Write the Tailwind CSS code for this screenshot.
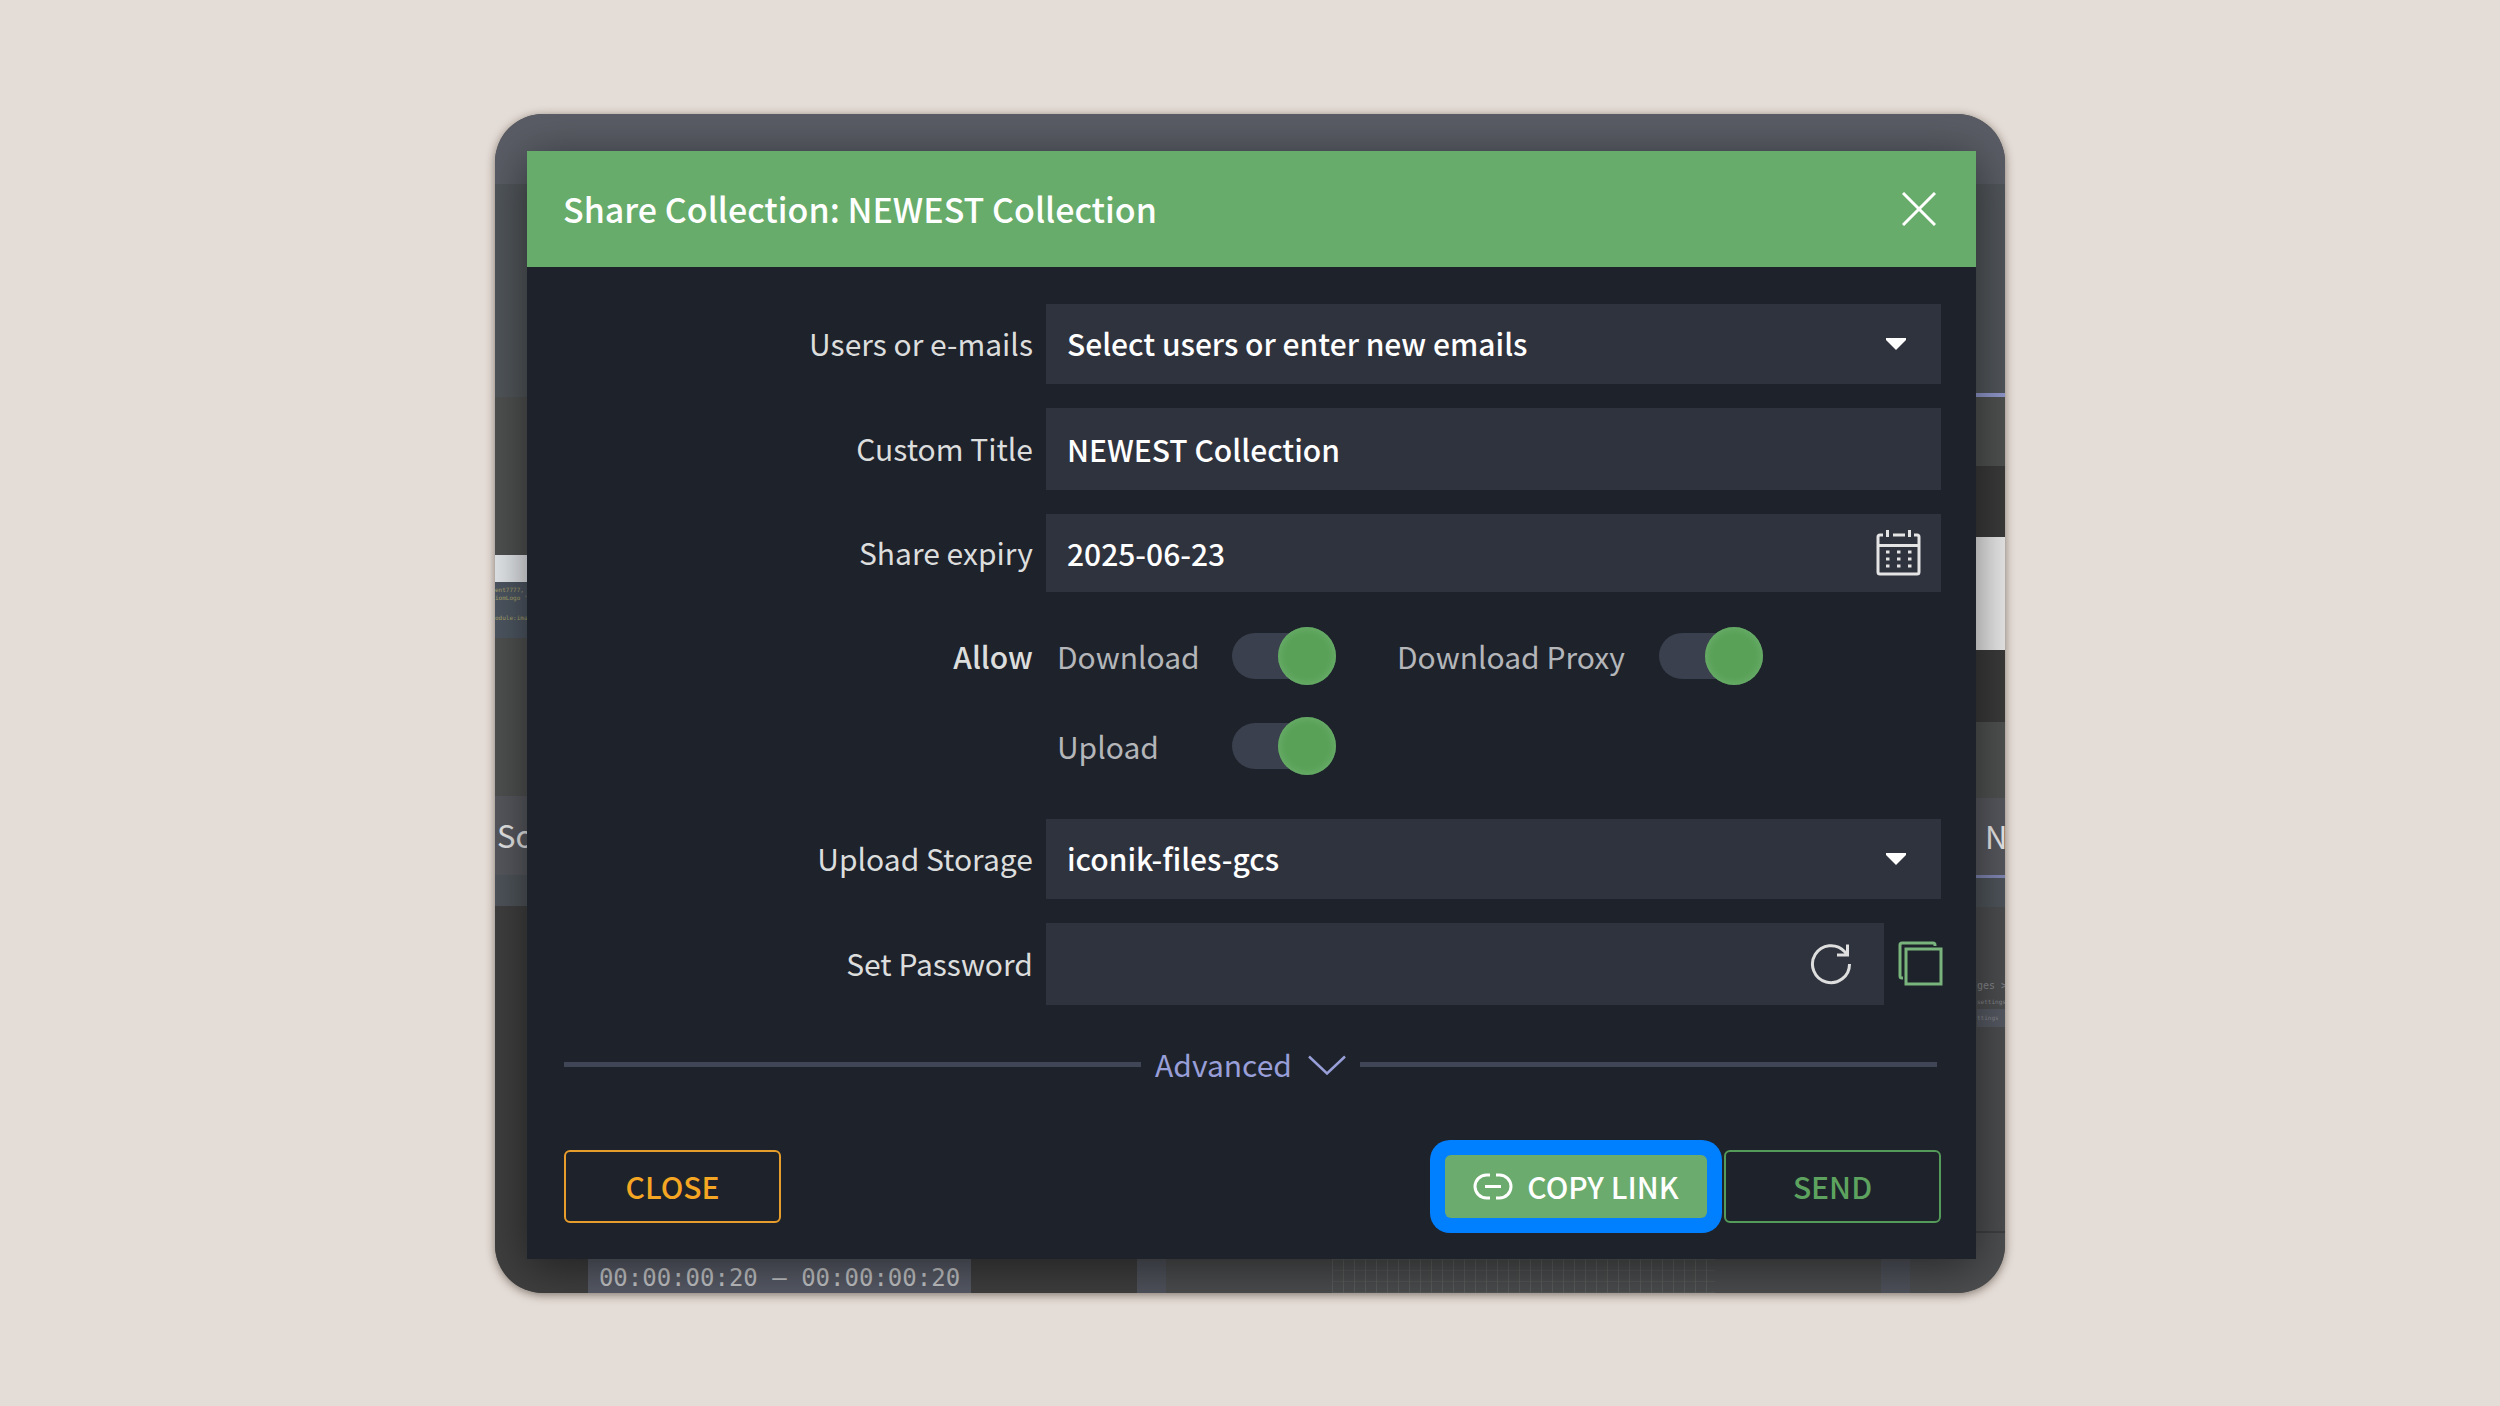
<!DOCTYPE html>
<html lang="en">
<head>
    <meta charset="UTF-8">
    <meta name="viewport" content="width=device-width, initial-scale=1.0">
    <title>Share Collection</title>
    <script src="https://cdn.jsdelivr.net/npm/@tailwindcss/browser@4"></script>
</head>
<body class="bg-[#e4dcd6] min-h-screen flex justify-center items-center font-['Noto_Sans_CJK_SC','Noto_Sans',sans-serif]">

    <main class="relative w-full max-w-[1510px] overflow-hidden rounded-[48px] bg-[#4b4c4d] pt-[37px] pb-[34px] pl-8 pr-[29px] shadow-[0_2px_10px_rgba(60,50,40,0.6)]">

        <!-- App behind the dialog -->
        <div class="absolute inset-0 flex flex-col" aria-hidden="true">
            <div class="h-[70px] shrink-0 bg-[#5a5d65]"></div>
            <div class="flex-1 flex">
                <div class="w-[642px] shrink-0 flex flex-col overflow-hidden">
                    <div class="h-[213px] bg-[#51565a]"></div>
                    <div class="h-[158px] bg-[#4f5050]"></div>
                    <div class="h-[27px] bg-[#e4e7ea]"></div>
                    <div class="h-14 bg-[#4d5661] pt-1 font-['DejaVu_Sans_Mono',monospace] text-[6px] leading-[8px] text-[#a8a26c]">
                        <p>ent7777, spl</p>
                        <p>iomLogo 'dat</p>
                        <p class="pt-3">odule:image</p>
                    </div>
                    <div class="h-[158px] bg-[#4f5050]"></div>
                    <div class="h-[79px] bg-[#57585e] flex items-center pl-[2px] text-[31px] text-[#e8e8e8]">Source</div>
                    <div class="h-[31px] bg-[#4e545a]"></div>
                    <div class="flex-1 bg-[#3f3f3f] flex items-end pl-[93px]">
                        <div class="bg-[#575b66] w-[383px] h-[34px] pt-1 flex items-center justify-center font-['DejaVu_Sans_Mono',monospace] text-2xl text-[#c4c5c7] whitespace-nowrap">00:00:00:20 – 00:00:00:20</div>
                    </div>
                </div>
                <div class="flex-1 flex flex-col overflow-hidden">
                    <div class="h-[209px] bg-[#51565a]"></div>
                    <div class="h-1 bg-[#9098cc]"></div>
                    <div class="h-[69px] bg-[#4f5151]"></div>
                    <div class="h-[71px] bg-[#3a3a3a]"></div>
                    <div class="h-[113px] bg-[#e9e9e9]"></div>
                    <div class="h-[72px] bg-[#3a3a3a]"></div>
                    <div class="h-[76px] bg-[#4f5151]"></div>
                    <div class="h-[77px] bg-[#57585e] flex items-center justify-end">
                        <span class="w-5 text-[31px] text-[#e8e8e8]">N</span>
                    </div>
                    <div class="h-[3px] bg-[#8087b4]"></div>
                    <div class="h-[29px] bg-[#4e545a]"></div>
                    <div class="h-[324px] bg-[#4c4d4f] pt-[70px] flex flex-col items-end font-['DejaVu_Sans_Mono',monospace] text-[#85878c]">
                        <p class="w-7 text-[10px] leading-[18px] whitespace-nowrap">ges &gt; a</p>
                        <p class="w-7 text-[6px] leading-[14px] whitespace-nowrap">settings</p>
                        <p class="w-7 text-[6px] leading-[18px] whitespace-nowrap bg-[#555962]">ttings</p>
                    </div>
                    <div class="h-[2px] bg-[#3e3f40]"></div>
                    <div class="flex-1 flex">
                        <div class="w-[29px] bg-[#50535c]"></div>
                        <div class="flex-1 flex justify-center bg-[#4c4d4e]">
                            <div class="w-[383px] bg-[repeating-linear-gradient(90deg,#5b5c5c_0_1px,transparent_1px_11px),repeating-linear-gradient(0deg,#555656_0_1px,transparent_1px_11px)]"></div>
                        </div>
                        <div class="w-[29px] bg-[#50535c]"></div>
                        <div class="w-[95px] bg-[#4d4e50]"></div>
                    </div>
                </div>
            </div>
        </div>

        <!-- Share dialog -->
        <form class="relative bg-[#1e222b] shadow-[0_8px_44px_rgba(0,0,0,0.5)] text-[30px]">
            <header class="h-[116px] bg-[#67ac6a] pl-9 pr-10 flex items-center justify-between">
                <h1 class="text-[34px] text-white font-medium">Share Collection: NEWEST Collection</h1>
                <button type="button" aria-label="Close dialog">
                    <svg class="w-[34px] h-[34px]" viewBox="0 0 34 34" fill="none" stroke="#fff" stroke-width="3"><path d="M1 1l32 32M33 1L1 33"/></svg>
                </button>
            </header>

            <div class="pl-[37px] pr-[35px] pt-[37px] pb-[26px]">
                <div class="flex flex-col gap-6 text-white">
                    <div class="grid grid-cols-[35%_1fr] items-center">
                        <label for="users" class="text-right pr-[13px] text-[#dcdddd]">Users or e-mails</label>
                        <div class="relative">
                            <select id="users" class="block w-full h-20 pl-[21px] appearance-none bg-[#2f333e] font-medium">
                                <option>Select users or enter new emails</option>
                            </select>
                            <svg class="absolute right-[34px] top-[34px] w-[22px] h-3 pointer-events-none" viewBox="0 0 22 12" fill="#fff"><path d="M1 0h20v2L11 12 1 2z"/></svg>
                        </div>
                    </div>

                    <div class="grid grid-cols-[35%_1fr] items-center">
                        <label for="title" class="text-right pr-[13px] text-[#dcdddd]">Custom Title</label>
                        <input id="title" type="text" value="NEWEST Collection" class="w-full h-[82px] pl-[21px] bg-[#2f333e] font-medium">
                    </div>

                    <div class="grid grid-cols-[35%_1fr] items-center">
                        <label for="expiry" class="text-right pr-[13px] text-[#dcdddd]">Share expiry</label>
                        <div class="relative">
                            <input id="expiry" type="text" value="2025-06-23" class="block w-full h-[78px] pl-[21px] bg-[#2f333e] font-medium">
                            <button type="button" aria-label="Pick a date" class="absolute right-5 top-4">
                                <svg class="w-[45px] h-[46px]" viewBox="0 0 45 46" fill="none" stroke="#e4e4e4" stroke-width="3">
                                    <path d="M7 5H4a2 2 0 0 0-2 2v35a2 2 0 0 0 2 2h37a2 2 0 0 0 2-2V7a2 2 0 0 0-2-2h-3M17 5h12M11.500 0v7M33.500 0v7M2 15.500h41"/>
                                    <path d="M10 22h3.500M21 22h3.500M32 22h3.500M10 29h3.500M21 29h3.500M32 29h3.500M10 36h3.500M21 36h3.500M32 36h3.500"/>
                                </svg>
                            </button>
                        </div>
                    </div>

                    <div class="grid grid-cols-[35%_1fr] mb-[9px]">
                        <span class="text-right pr-[13px] text-[#dcdddd] leading-[80px] font-medium">Allow</span>
                        <div class="grid grid-cols-[175px_165px_262px_105px] gap-y-[10px] pl-[11px] text-[#b4b6b9]">
                            <label for="download" class="leading-[80px]">Download</label>
                            <input id="download" type="checkbox" role="switch" checked class="relative self-center appearance-none w-[104px] h-[46px] rounded-full bg-[#3a404d] after:absolute after:right-0 after:-top-[6px] after:size-[58px] after:rounded-full after:bg-[#5aa158] after:shadow-[inset_0_0_8px_#70b373]">
                            <label for="proxy" class="leading-[80px]">Download Proxy</label>
                            <input id="proxy" type="checkbox" role="switch" checked class="relative self-center appearance-none w-[104px] h-[46px] rounded-full bg-[#3a404d] after:absolute after:right-0 after:-top-[6px] after:size-[58px] after:rounded-full after:bg-[#5aa158] after:shadow-[inset_0_0_8px_#70b373]">
                            <label for="upload" class="leading-[80px]">Upload</label>
                            <input id="upload" type="checkbox" role="switch" checked class="relative self-center appearance-none w-[104px] h-[46px] rounded-full bg-[#3a404d] after:absolute after:right-0 after:-top-[6px] after:size-[58px] after:rounded-full after:bg-[#5aa158] after:shadow-[inset_0_0_8px_#70b373]">
                        </div>
                    </div>

                    <div class="grid grid-cols-[35%_1fr] items-center">
                        <label for="storage" class="text-right pr-[13px] text-[#dcdddd]">Upload Storage</label>
                        <div class="relative">
                            <select id="storage" class="block w-full h-20 pl-[21px] appearance-none bg-[#2f333e] font-medium">
                                <option>iconik-files-gcs</option>
                            </select>
                            <svg class="absolute right-[34px] top-[34px] w-[22px] h-3 pointer-events-none" viewBox="0 0 22 12" fill="#fff"><path d="M1 0h20v2L11 12 1 2z"/></svg>
                        </div>
                    </div>

                    <div class="grid grid-cols-[35%_1fr] items-center">
                        <label for="password" class="text-right pr-[13px] text-[#dcdddd]">Set Password</label>
                        <div class="flex items-center -mr-[2px]">
                            <div class="relative flex-1">
                                <input id="password" type="text" class="block w-full h-[82px] pl-[21px] pr-24 bg-[#2f333e] font-medium">
                                <button type="button" aria-label="Generate password" class="absolute right-8 top-5">
                                    <svg class="w-[42px] h-[42px]" viewBox="0 0 42 42" fill="none" stroke="#dedede" stroke-width="3"><path d="M39.500 21A18.500 18.500 0 1 1 34.500 8.500L37.500 11.500M37.500 1.500v10.500H27"/></svg>
                                </button>
                            </div>
                            <button type="button" aria-label="Copy password" class="w-[59px] flex justify-end">
                                <svg class="w-[45px] h-[45px]" viewBox="0 0 45 45" fill="none" stroke="#78b47c" stroke-width="3"><path d="M8 8h35v35H8z"/><path d="M37 5V4a2 2 0 0 0-2-2H4a2 2 0 0 0-2 2v31a2 2 0 0 0 2 2h1"/></svg>
                            </button>
                        </div>
                    </div>
                </div>

                <div class="flex items-center gap-[14px] mt-10 pr-1 h-10">
                    <span class="flex-1 h-[5px] bg-[#404656]"></span>
                    <button type="button" class="flex items-center gap-4 text-[#989fd8]">
                        Advanced
                        <svg class="w-[38px] h-5" viewBox="0 0 38 20" fill="none" stroke="currentColor" stroke-width="2.500"><path d="M1 1.500l18 17 18-17"/></svg>
                    </button>
                    <span class="flex-1 h-[5px] bg-[#404656]"></span>
                </div>

                <footer class="flex items-center justify-between mt-[55px] font-medium">
                    <button type="button" class="w-[217px] h-[73px] border-2 border-[#e79d2b] rounded-md text-[#f5a623]">CLOSE</button>
                    <div class="flex items-center gap-[2px]">
                        <button type="button" class="w-[292px] h-[93px] p-[15px] rounded-[20px] bg-[#007fff]">
                            <span class="h-full rounded-md bg-[#6bab6d] text-white flex items-center justify-center gap-[14px]">
                                <svg class="w-10 h-[27px]" viewBox="0 0 40 27" fill="none" stroke="currentColor" stroke-width="3"><path d="M17 2h-3.500a11.500 11.500 0 0 0 0 23H17M23 2h3.500a11.500 11.500 0 0 1 0 23H23M12 13.500h16"/></svg>
                                COPY LINK
                            </span>
                        </button>
                        <button type="submit" class="w-[217px] h-[73px] border-2 border-[#549a58] rounded-md text-[#5da35f]">SEND</button>
                    </div>
                </footer>
            </div>
        </form>
    </main>

</body>
</html>
